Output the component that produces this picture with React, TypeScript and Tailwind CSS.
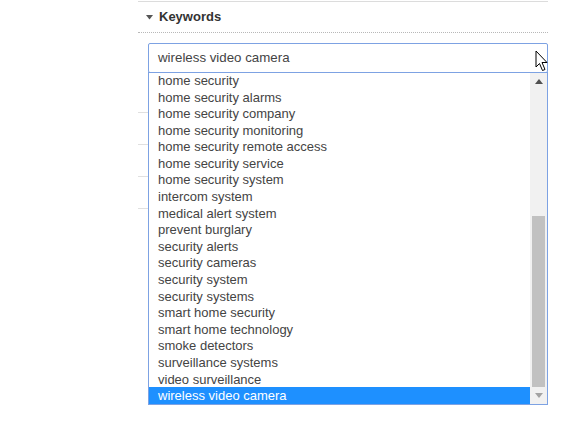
import React from "react";

const items = [
  "home security",
  "home security alarms",
  "home security company",
  "home security monitoring",
  "home security remote access",
  "home security service",
  "home security system",
  "intercom system",
  "medical alert system",
  "prevent burglary",
  "security alerts",
  "security cameras",
  "security system",
  "security systems",
  "smart home security",
  "smart home technology",
  "smoke detectors",
  "surveillance systems",
  "video surveillance",
  "wireless video camera",
];

export default function App() {
  return (
    <div
      className="relative w-[579px] h-[425px] bg-white overflow-hidden"
      style={{ fontFamily: '"Liberation Sans", Arial, sans-serif' }}
    >
      <div className="ml-[138px] w-[410px] pt-px">
        <div className="border-t border-[#dcdcdc]" />
        <div className="h-[31px] flex items-center pl-[8px] border-b border-dotted border-[#b8b8b8]">
          <svg width="7" height="5" viewBox="0 0 7 5" className="mr-[6px]">
            <polygon points="0,0 7,0 3.5,4.5" fill="#555" />
          </svg>
          <span className="text-[13px] font-bold text-[#333]">Keywords</span>
        </div>
        <div className="pt-[10px] pl-[10px]">
          <div className="h-[30px] w-[400px] border border-[#7da2e3] rounded-[2px] flex items-center pl-[9px] text-[13.3px] text-[#444]">
            wireless video camera
          </div>
        </div>
        <div className="flex flex-col mt-[8px]">
          {[0, 1, 2, 3].map((i) => (
            <div key={i} className="h-[32px] border-b border-[#e0e0e0]" />
          ))}
        </div>
      </div>

      {/* dropdown list */}
      <div className="absolute left-[148px] top-[72px] w-[400px] h-[333px] bg-white border border-[#7da2e3] flex">
        <div className="flex-1 flex flex-col justify-end overflow-hidden">
          {items.map((t) => {
            const sel = t === "wireless video camera";
            return (
              <div
                key={t}
                className={
                  "h-[16.6px] shrink-0 flex items-center pl-[9px] text-[13px] leading-none whitespace-nowrap " +
                  (sel ? "bg-[#1e90ff] text-white" : "text-[#444]")
                }
              >
                {t}
              </div>
            );
          })}
        </div>
        <div className="w-[17px] bg-[#f1f1f1] flex flex-col items-center">
          <div className="h-[17px] flex items-center justify-center">
            <svg width="8" height="5" viewBox="0 0 8 5">
              <polygon points="0,5 8,5 4,0" fill="#505050" />
            </svg>
          </div>
          <div className="flex-1 w-full px-[2px] flex flex-col justify-end">
            <div className="h-[171px] bg-[#c1c1c1]" />
          </div>
          <div className="h-[17px] flex items-center justify-center">
            <svg width="8" height="5" viewBox="0 0 8 5">
              <polygon points="0,0 8,0 4,5" fill="#a3a3a3" />
            </svg>
          </div>
        </div>
      </div>

      {/* mouse cursor */}
      <svg
        className="absolute left-[535px] top-[50px]"
        width="14"
        height="22"
        viewBox="0 0 14 22"
      >
        <path
          d="M1 1 L1 17 L4.5 13.5 L7.5 20.5 L10 19.5 L7 12.5 L12 12.5 Z"
          fill="#fff"
          stroke="#000"
          strokeWidth="1"
          strokeLinejoin="miter"
        />
      </svg>
    </div>
  );
}
